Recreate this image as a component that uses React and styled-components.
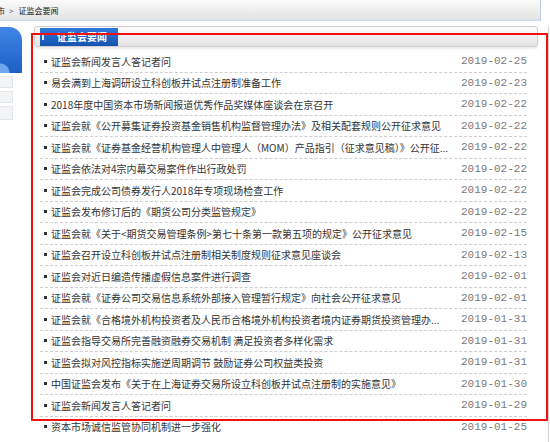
import React from 'react';
import styled, { createGlobalStyle } from 'styled-components';

const GlobalStyle = createGlobalStyle`
  html, body {
    margin: 0;
    padding: 0;
    background: #ffffff;
    overflow: hidden;
  }
  body {
    font-family: "Noto Sans CJK SC", "Noto Sans", sans-serif;
    color: #333;
  }
`;

const Page = styled.div`
  width: 550px;
  height: 442px;
  overflow: hidden;
`;

const Crumbs = styled.div`
  width: 541px;
  height: 21px;
  box-sizing: border-box;
  display: flex;
  align-items: center;
  background: linear-gradient(#fbfbfb, #e2e2e2);
  border-right: 1px solid #b9cde8;
  border-bottom: 1px solid #c9d8ec;
  font-size: 8px;
  color: #222;
  white-space: nowrap;
`;

const CrumbCut = styled.span`
  margin-left: -3px;
`;

const CrumbSep = styled.span`
  margin: 0 5px 0 4px;
  color: #555;
`;

const Body = styled.div`
  display: flex;
  align-items: flex-start;
  margin-top: 5px;
`;

const Side = styled.div`
  width: 22px;
  flex: none;
  display: flex;
  flex-direction: column;
  gap: 3px;
  padding-top: 1px;
`;

const SideBadge = styled.div`
  height: 46px;
  border-top-right-radius: 13px;
  background: radial-gradient(circle at 0 100%, #6ea5ec 0 9px, transparent 10px),
    linear-gradient(#3f86e6, #1d5fc4);
`;

const SideBox = styled.div`
  width: 13px;
  height: ${p => p.h}px;
  box-sizing: border-box;
  background: #f3f4f6;
  border: 1px solid #e3e5e8;
  border-left: none;
`;

const Main = styled.div`
  position: relative;
  width: 514px;
  margin-left: 12px;
  min-height: 420px;
  border-right: 1px solid #d4d4d4;
`;

const Bar = styled.div`
  width: 504px;
  height: 21px;
  box-sizing: border-box;
  display: flex;
  align-items: flex-start;
  padding: 1px 0 0 5px;
  background: linear-gradient(#fdfdfd, #e3e3e3);
  border: 1px solid #cfcfcf;
  border-radius: 3px;
  box-shadow: 0 2px 2px rgba(0, 0, 0, 0.08);
`;

const Tab = styled.div`
  position: relative;
  width: 78px;
  height: 18px;
  box-sizing: border-box;
  padding-left: 17px;
  display: flex;
  align-items: center;
  background: linear-gradient(#2f78da, #1553b0);
  color: #fff;
  font-size: 9.8px;
  font-weight: bold;
  letter-spacing: 0.2px;

  &::before {
    content: '';
    position: absolute;
    left: 2px;
    top: 7px;
    width: 2px;
    height: 5px;
    background: #dfe9f8;
  }
`;

const List = styled.ul`
  list-style: none;
  margin: 4px 0 0 6px;
  padding: 0;
  width: 487px;
`;

const Row = styled.li`
  height: 20.5px;
  display: flex;
  align-items: center;
  border-bottom: 1px dashed #cfcfcf;
  padding-left: 4px;
  &:last-child {
    border-bottom: none;
  }
`;

const Dot = styled.span`
  width: 3px;
  height: 3px;
  background: #333;
  flex: none;
  margin-right: 4px;
`;

const Title = styled.span`
  flex: 1;
  font-size: 10px;
  color: #333;
  white-space: nowrap;
  overflow: hidden;
`;

const Date = styled.span`
  flex: none;
  font-family: "Liberation Mono", monospace;
  font-size: 11px;
  color: #7a7a7a;
  margin-left: 8px;
`;

const Marker = styled.div`
  position: absolute;
  left: -3px;
  top: 7px;
  width: 517px;
  height: 388px;
  box-sizing: border-box;
  border: 2px solid #f01010;
  pointer-events: none;
`;

const news = [
  ['证监会新闻发言人答记者问', '2019-02-25'],
  ['易会满到上海调研设立科创板并试点注册制准备工作', '2019-02-23'],
  ['2018年度中国资本市场新闻报道优秀作品奖媒体座谈会在京召开', '2019-02-22'],
  ['证监会就《公开募集证券投资基金销售机构监督管理办法》及相关配套规则公开征求意见', '2019-02-22'],
  ['证监会就《证券基金经营机构管理人中管理人（MOM）产品指引（征求意见稿）》公开征...', '2019-02-22'],
  ['证监会依法对4宗内幕交易案件作出行政处罚', '2019-02-22'],
  ['证监会完成公司债券发行人2018年专项现场检查工作', '2019-02-22'],
  ['证监会发布修订后的《期货公司分类监管规定》', '2019-02-22'],
  ['证监会就《关于<期货交易管理条例>第七十条第一款第五项的规定》公开征求意见', '2019-02-15'],
  ['证监会召开设立科创板并试点注册制相关制度规则征求意见座谈会', '2019-02-13'],
  ['证监会对近日编造传播虚假信息案件进行调查', '2019-02-01'],
  ['证监会就《证券公司交易信息系统外部接入管理暂行规定》向社会公开征求意见', '2019-02-01'],
  ['证监会就《合格境外机构投资者及人民币合格境外机构投资者境内证券期货投资管理办...', '2019-01-31'],
  ['证监会指导交易所完善融资融券交易机制 满足投资者多样化需求', '2019-01-31'],
  ['证监会拟对风控指标实施逆周期调节 鼓励证券公司权益类投资', '2019-01-31'],
  ['中国证监会发布《关于在上海证券交易所设立科创板并试点注册制的实施意见》', '2019-01-30'],
  ['证监会新闻发言人答记者问', '2019-01-29'],
  ['资本市场诚信监管协同机制进一步强化', '2019-01-25'],
];

const App = () => {
  return (
    <Page>
      <GlobalStyle />
      <Crumbs>
        <CrumbCut>市</CrumbCut>
        <CrumbSep>&gt;</CrumbSep>
        <span>证监会要闻</span>
      </Crumbs>
      <Body>
        <Side>
          <SideBadge />
          <SideBox h={12} />
          <SideBox h={12} />
          <SideBox h={14} />
        </Side>
        <Main>
          <Bar>
            <Tab>证监会要闻</Tab>
          </Bar>
          <List>
            {news.map(([title, date], i) => (
              <Row key={i}>
                <Dot />
                <Title>{title}</Title>
                <Date>{date}</Date>
              </Row>
            ))}
          </List>
          <Marker />
        </Main>
      </Body>
    </Page>
  );
};

export default App;
